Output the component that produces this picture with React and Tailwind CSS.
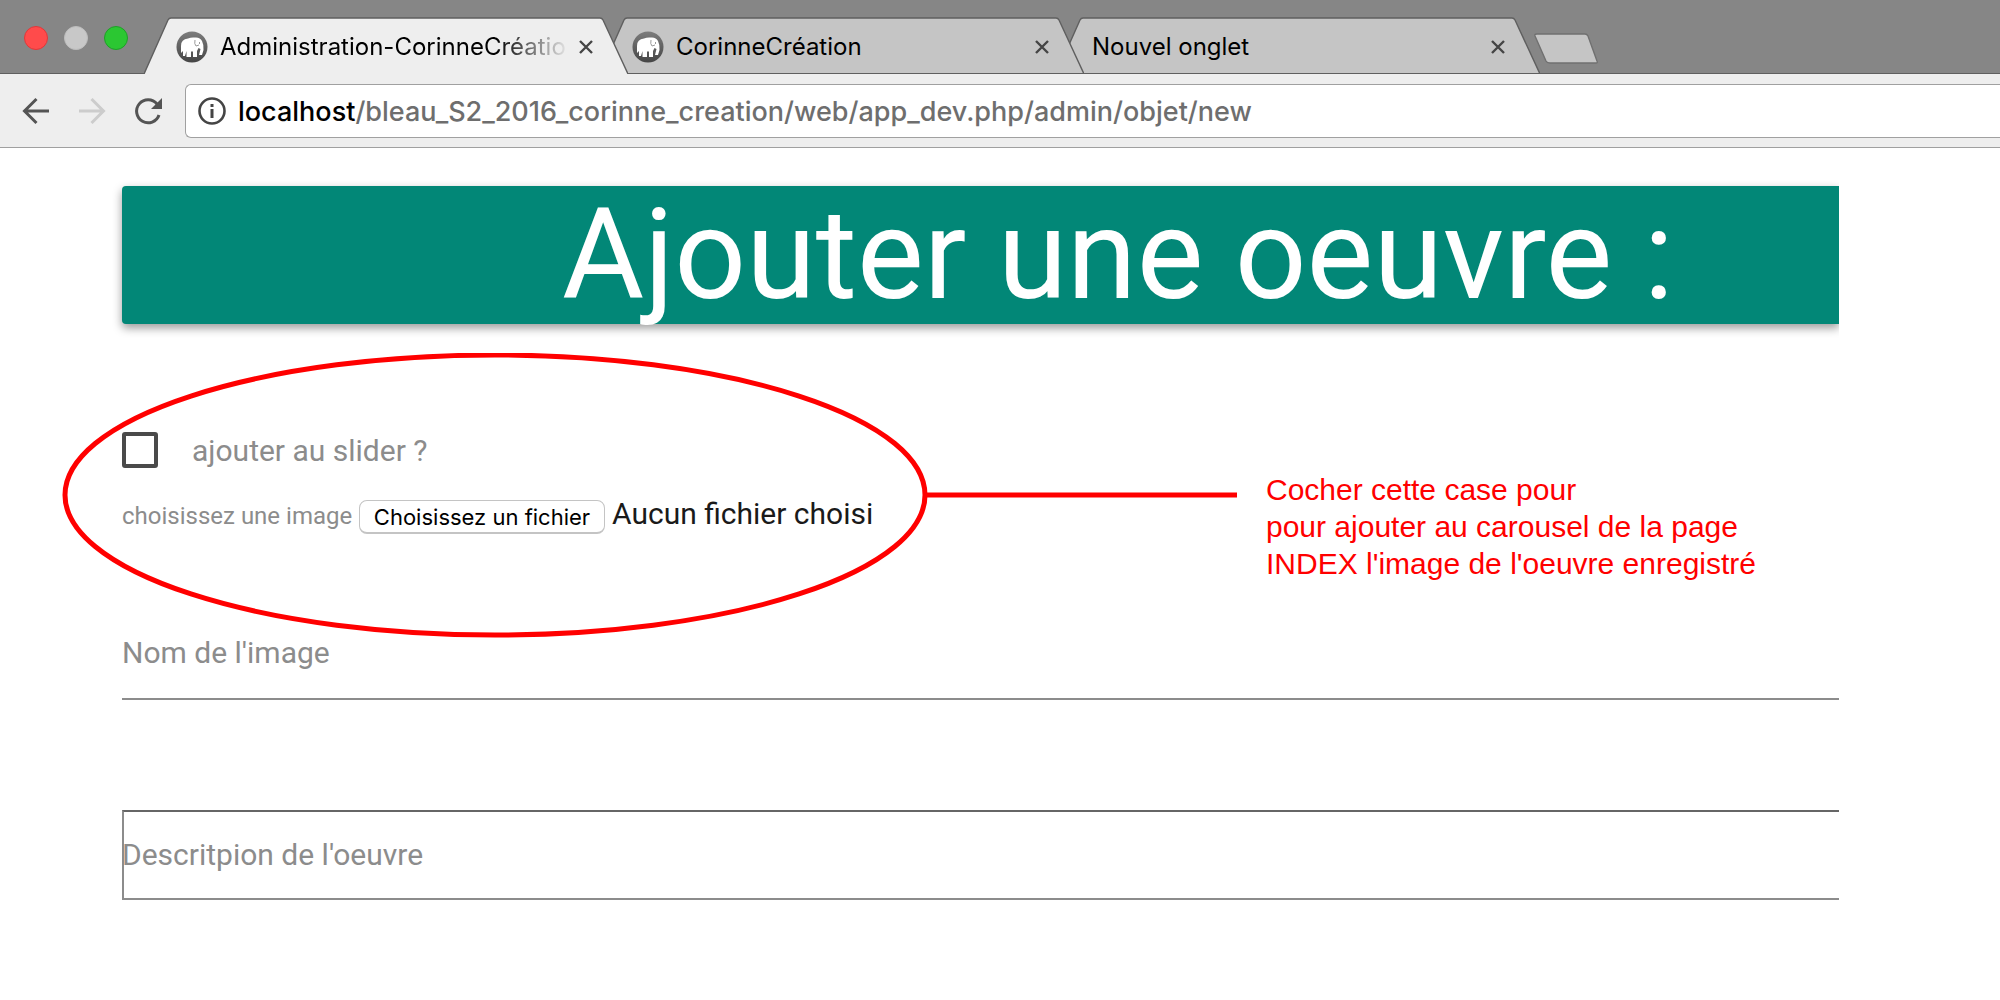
import { useRef } from "react";

const CHROME_FONT = "font-['Inter','Noto_Sans',sans-serif]";

function Favicon() {
  return (
    <svg viewBox="0 0 32 32" className="size-8 shrink-0" aria-hidden="true">
      <defs>
        <linearGradient id="fav" x1="0" y1="0" x2="0" y2="1">
          <stop offset="0" stopColor="#7d7d7d" />
          <stop offset="1" stopColor="#454545" />
        </linearGradient>
      </defs>
      <circle cx="16" cy="16" r="15.5" fill="url(#fav)" />
      <path
        d="M5 22V15Q5 8 12 7.500Q15 6 19 6.500Q24 6 26 10Q28 14 27.500 19L26 24H23L24.500 18L22.500 17L21 20V26H17V20.500H15V26H10.500V20L9 25H7V20z"
        fill="#fff"
      />
      <path d="M19 9q-1 4 1 6l3-1M23.500 11v2" fill="none" stroke="#9a9a9a" strokeWidth="1" />
    </svg>
  );
}

function CloseIcon() {
  return (
    <svg viewBox="0 0 16 16" className="size-4" aria-hidden="true">
      <path d="M2 2l12 12M14 2L2 14" stroke="#454545" strokeWidth="2.4" fill="none" />
    </svg>
  );
}

function Tab({ title, icon, active, layer }) {
  return (
    <div role="tab" aria-selected={Boolean(active)} className={`relative -mr-7 h-[57px] w-[484px] min-w-0 ${layer}`}>
      <svg
        viewBox="0 0 484 57"
        preserveAspectRatio="none"
        className="absolute inset-0 size-full"
        aria-hidden="true"
      >
        <path d="M0 57L24 3q1-2 3-2H456q2 0 3 2L484 57z" fill={active ? "#eeeeee" : "#c5c5c5"} />
        <path d="M0 57L24 3q1-2 3-2H456q2 0 3 2L484 57" fill="none" stroke="#5f5f5f" strokeWidth="1.4" />
        {!active && <path d="M0 56.500H484" stroke="#5f5f5f" strokeWidth="1" />}
      </svg>
      <div className="relative flex h-full items-center gap-3 pl-8 pr-[34px] pt-0.5">
        {icon && <Favicon />}
        <span
          className={
            active
              ? "flex-1 overflow-hidden whitespace-nowrap bg-linear-to-r from-black from-80% to-black/5 bg-clip-text text-2xl text-transparent"
              : icon
                ? "flex-1 overflow-hidden whitespace-nowrap text-2xl text-black"
                : "flex-1 overflow-hidden whitespace-nowrap pl-1 text-2xl text-black"
          }
        >
          {title}
        </span>
        <button type="button" aria-label="Fermer l'onglet">
          <CloseIcon />
        </button>
      </div>
    </div>
  );
}

function TabStrip() {
  return (
    <div className="flex h-[74px] items-end bg-[#868686] shadow-[inset_0_-1px_0_#5f5f5f]">
      <div className="flex h-full w-[144px] shrink-0 items-center gap-4 pl-6 pt-0.5">
        <button type="button" aria-label="Fermer" className="size-6 rounded-full border border-[#e0383a] bg-[#ff4b4b]" />
        <button type="button" aria-label="Réduire" className="size-6 rounded-full border border-[#bdbdbd] bg-[#c8c8c8]" />
        <button type="button" aria-label="Agrandir" className="size-6 rounded-full border border-[#1f9f28] bg-[#2bc732]" />
      </div>
      <div role="tablist" className="flex min-w-0">
        <Tab title="Administration-CorinneCréation" icon active layer="z-20" />
        <Tab title="CorinneCréation" icon layer="z-10" />
        <Tab title="Nouvel onglet" layer="z-0" />
      </div>
      <button type="button" aria-label="Nouvel onglet" className="mb-2 ml-[21px] shrink-0">
        <svg viewBox="0 0 66 34" className="h-[34px] w-[66px]" aria-hidden="true">
          <path
            d="M4 2H52q2 0 3 2l9 25q1 2-1 2H17q-3 0-4-2L2 4q-1-2 2-2z"
            fill="#c5c5c5"
            stroke="#707070"
            strokeWidth="1.4"
          />
        </svg>
      </button>
    </div>
  );
}

function Toolbar() {
  return (
    <div className="flex h-[74px] items-center border-b border-[#a0a0a0] bg-[#eeeeee]">
      <div className="flex w-[185px] shrink-0 items-center gap-6 pl-5">
        <button type="button" aria-label="Précédent">
          <svg viewBox="0 0 32 32" className="size-8" aria-hidden="true">
            <path d="M29 16H5M16.500 4L4.500 16l12 12" fill="none" stroke="#545454" strokeWidth="3" />
          </svg>
        </button>
        <button type="button" aria-label="Suivant">
          <svg viewBox="0 0 32 32" className="size-8" aria-hidden="true">
            <path d="M3 16H27M15.500 4l12 12-12 12" fill="none" stroke="#cccccc" strokeWidth="3" />
          </svg>
        </button>
        <button type="button" aria-label="Actualiser">
          <svg viewBox="0 0 32 32" className="size-8" aria-hidden="true">
            <path d="M27 20A11.500 11.500 0 1 1 25 9" fill="none" stroke="#545454" strokeWidth="3" />
            <path d="M30 3v11H19z" fill="#545454" />
          </svg>
        </button>
      </div>
      <div className="flex h-[54px] min-w-0 flex-1 items-center gap-3 rounded-l-md border border-r-0 border-[#a0a0a0] bg-white pl-3">
        <svg viewBox="0 0 28 28" className="size-7 shrink-0" aria-hidden="true">
          <circle cx="14" cy="14" r="12.500" fill="none" stroke="#454545" strokeWidth="2.600" />
          <path d="M14 12v9M14 7v3" stroke="#454545" strokeWidth="3" />
        </svg>
        <div
          role="textbox"
          aria-label="Adresse"
          className="whitespace-nowrap pt-0.5 text-[27px] font-medium leading-9 text-[#6e6e6e]"
        >
          <span className="text-black">localhost</span>
          /bleau_S2_2016_corinne_creation/web/app_dev.php/admin/objet/new
        </div>
      </div>
    </div>
  );
}

function FileField() {
  const input = useRef(null);
  return (
    <div className="mt-7 flex items-start">
      <label htmlFor="image" className="w-[237px] pt-1 text-2xl text-[#8c8c8c]">
        choisissez une image
      </label>
      <input ref={input} id="image" type="file" tabIndex={-1} className="sr-only" />
      <button
        type="button"
        onClick={() => input.current.click()}
        className={`${CHROME_FONT} mt-1 h-[34px] w-[246px] rounded-lg border border-b-2 border-[#c4c4c4] bg-white text-[22px] leading-7 text-black`}
      >
        Choisissez un fichier
      </button>
      <span className="ml-[7px] text-[30px] leading-9 text-[#1a1a1a]">Aucun fichier choisi</span>
    </div>
  );
}

function Callout() {
  return (
    <svg
      viewBox="0 0 1176 286"
      className="pointer-events-none absolute -left-[60px] -top-[13px] h-[286px] w-[1176px]"
      aria-hidden="true"
    >
      <ellipse cx="433" cy="142" rx="430" ry="140" fill="none" stroke="#ff0000" strokeWidth="5" />
      <path d="M863 142H1175" stroke="#ff0000" strokeWidth="5" />
    </svg>
  );
}

export default function App() {
  return (
    <div className="min-h-screen bg-white">
      <header className={CHROME_FONT}>
        <TabStrip />
        <Toolbar />
      </header>
      <main className="pl-[122px] pr-[161px] pt-[38px] font-['Roboto',sans-serif]">
        <div className="-ml-4 -mt-4 overflow-hidden pb-6 pl-4 pt-4">
          <div className="rounded-l bg-[#028777] shadow-[0_4px_10px_rgba(0,0,0,0.4)]">
            <h1 className="h-[138px] whitespace-nowrap pl-[440px] text-[126px] leading-[138px] text-white">
              Ajouter une oeuvre :
            </h1>
          </div>
        </div>
        <form>
          <div className="relative mt-[18px] flex items-start justify-between">
            <div className="pt-[66px]">
              <div className="flex h-9 items-center gap-[34px]">
                <input
                  id="slider"
                  type="checkbox"
                  className="size-9 appearance-none rounded-[3px] border-4 border-[#4a4a4a] checked:bg-[#028777]"
                />
                <label htmlFor="slider" className="pt-0.5 text-[30px] leading-9 text-[#8c8c8c]">
                  ajouter au slider ?
                </label>
              </div>
              <FileField />
            </div>
            <p className="mr-[83px] pt-[105px] font-['Liberation_Sans',Arial,sans-serif] text-[30px] leading-[37px] text-[#ff0000]">
              Cocher cette case pour
              <br />
              pour ajouter au carousel de la page
              <br />
              INDEX l'image de l'oeuvre enregistré
            </p>
            <Callout />
          </div>
          <div className="relative mt-[53px] flex flex-col">
            <label htmlFor="nom" className="absolute left-0 top-0 text-[30px] leading-9 text-[#8c8c8c]">
              Nom de l'image
            </label>
            <input id="nom" type="text" className="h-[65px] w-full border-b-2 border-[#8c8c8c] text-[30px] outline-none" />
          </div>
          <div className="relative mt-[110px]">
            <label htmlFor="description" className="absolute left-0 top-[27px] text-[30px] leading-9 text-[#8c8c8c]">
              Descritpion de l'oeuvre
            </label>
            <textarea
              id="description"
              className="block h-[90px] w-full resize-none border-y-2 border-l-2 border-[#8c8c8c] border-t-[#666666] text-[30px] outline-none"
            />
          </div>
        </form>
      </main>
    </div>
  );
}
